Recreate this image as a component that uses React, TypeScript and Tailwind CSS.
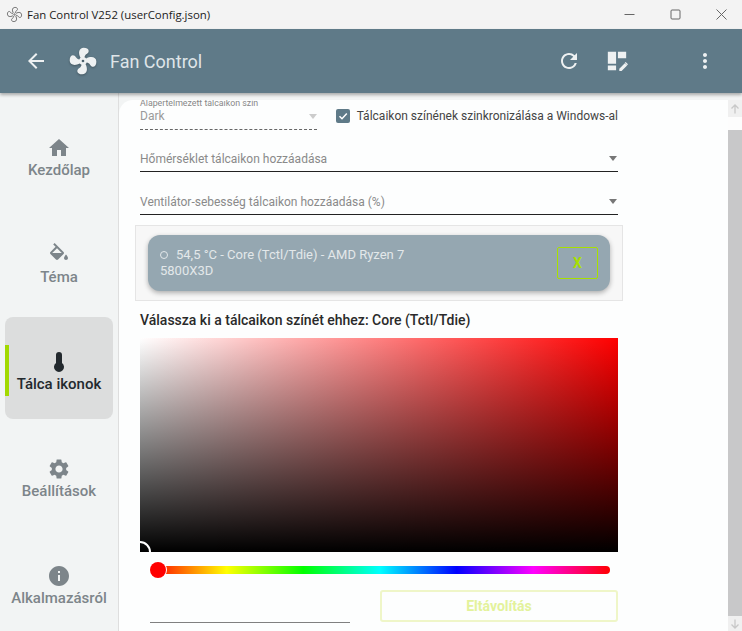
import React from 'react';
import { MdArrowBack, MdHome, MdInfo, MdMoreVert, MdRefresh, MdSettings } from 'react-icons/md';

const FAN_PATH =
  'M12,11A1,1 0 0,0 11,12A1,1 0 0,0 12,13A1,1 0 0,0 13,12A1,1 0 0,0 12,11M12.5,2C17,2 17.11,5.57 14.75,6.75C13.76,7.24 13.32,8.29 13.13,9.22C13.61,9.42 14.03,9.73 14.35,10.13C18.05,8.13 22.03,8.92 22.03,12.5C22.03,17 18.46,17.1 17.28,14.73C16.78,13.74 15.72,13.3 14.79,13.11C14.59,13.59 14.28,14 13.88,14.34C15.87,18.03 15.08,22 11.5,22C7,22 6.91,18.42 9.27,17.24C10.25,16.75 10.69,15.71 10.89,14.79C10.4,14.59 9.97,14.27 9.65,13.87C5.96,15.85 2,15.07 2,11.5C2,7 5.56,6.89 6.74,9.26C7.24,10.25 8.29,10.68 9.22,10.87C9.41,10.39 9.73,9.97 10.14,9.65C8.15,5.96 8.94,2 12.5,2Z';

function ThermoIcon({ className }: { className?: string }) {
  return (
    <svg viewBox="0 0 24 24" className={className} fill="currentColor">
      <path d="M15 13V5a3 3 0 0 0-6 0v8a5 5 0 1 0 6 0z" />
    </svg>
  );
}

function BucketIcon({ className }: { className?: string }) {
  return (
    <svg viewBox="0 0 24 24" className={className} fill="currentColor">
      <path d="M16.56 8.94L7.62 0 6.21 1.41l2.38 2.38-5.15 5.15c-.59.59-.59 1.54 0 2.12l5.5 5.5c.29.29.68.44 1.06.44s.77-.15 1.06-.44l5.5-5.5c.59-.58.59-1.53 0-2.12zM5.21 10L10 5.21 14.79 10H5.21zM19 11.5s-2 2.17-2 3.5c0 1.1.9 2 2 2s2-.9 2-2c0-1.33-2-3.5-2-3.5z" />
    </svg>
  );
}

function TitleBar() {
  return (
    <div className="h-[29px] shrink-0 bg-[#f3f3f3] flex items-center text-[#1c1c1c]">
      <svg viewBox="0 0 24 24" className="w-[17px] h-[17px] ml-[6px] text-[#666]" fill="none" stroke="currentColor" strokeWidth="1.3">
        <path d={FAN_PATH} />
      </svg>
      <span className="ml-[4px] text-[11.4px] font-['Open_Sans',sans-serif]">Fan Control V252 (userConfig.json)</span>
      <div className="ml-auto flex items-center gap-[35px] pr-[15px] text-[#666]">
        <svg width="11" height="11" viewBox="0 0 11 11"><path d="M0.5 5.5H10.5" stroke="currentColor" /></svg>
        <svg width="11" height="11" viewBox="0 0 11 11" fill="none"><rect x="1" y="1" width="9" height="9" rx="1" stroke="currentColor" /></svg>
        <svg width="11" height="11" viewBox="0 0 11 11"><path d="M0.5 0.5L10.5 10.5M10.5 0.5L0.5 10.5" stroke="currentColor" /></svg>
      </div>
    </div>
  );
}

function Header() {
  return (
    <div className="relative z-10 h-[64px] shrink-0 bg-[#5f7a88] shadow-[0_2px_3px_rgba(0,0,0,0.3)] flex items-center text-[#eef1f2]">
      <MdArrowBack className="w-[24px] h-[24px] ml-[24px]" />
      <svg viewBox="0 0 24 24" className="w-[32px] h-[32px] ml-[19px] drop-shadow-[0_1px_1px_rgba(0,0,0,0.3)]" fill="currentColor">
        <path d={FAN_PATH} />
      </svg>
      <span className="ml-[11px] text-[18px] text-[#dfe5e8]">Fan Control</span>
      <div className="ml-auto flex items-center">
        <MdRefresh className="w-[24px] h-[24px]" />
        <svg viewBox="0 0 24 24" className="w-[22px] h-[22px] ml-[25px]" fill="currentColor">
          <path d="M2 2h9v13H2zM13 2h9v7h-9zM2 17h9v5H2zM14.5 20.5v2.5H17l6-6-2.5-2.5zM21.5 13l2.5 2.5-1 1-2.5-2.5z" />
        </svg>
        <MdMoreVert className="w-[24px] h-[24px] ml-[65px] mr-[25px]" />
      </div>
    </div>
  );
}

const NAV = [
  { label: 'Kezdőlap', icon: <MdHome className="w-[24px] h-[24px]" /> },
  { label: 'Téma', icon: <BucketIcon className="w-[24px] h-[24px]" /> },
  { label: 'Tálca ikonok', icon: <ThermoIcon className="w-[24px] h-[24px]" />, active: true },
  { label: 'Beállítások', icon: <MdSettings className="w-[24px] h-[24px]" /> },
  { label: 'Alkalmazásról', icon: <MdInfo className="w-[24px] h-[24px]" /> },
];

function Sidebar() {
  return (
    <div className="w-[119px] shrink-0 border-r border-[#dedede] pt-[10px] pl-[5px] pr-[5px] flex flex-col gap-[5px]">
      {NAV.map((item) => (
        <div
          key={item.label}
          className={`relative h-[102px] shrink-0 rounded-lg flex flex-col items-center justify-center pt-[7px] font-medium text-[15px] leading-[18px] whitespace-nowrap ${
            item.active ? 'bg-[#dcdddd] text-[#23292e]' : 'text-[#7d858a]'
          }`}
        >
          {item.active && <div className="absolute left-0 top-[28px] w-[4px] h-[51px] bg-[#a2d900]" />}
          {item.icon}
          <span className="mt-[1px]">{item.label}</span>
        </div>
      ))}
    </div>
  );
}

function Dropdown({ label }: { label: string }) {
  return (
    <div className="h-[25px] flex items-center justify-between border-b border-[#222] pb-[2px] text-[12px] text-[#8a8a8a]">
      <span className="mt-[2px]">{label}</span>
      <span className="w-0 h-0 border-x-[4px] border-x-transparent border-t-[5px] border-t-[#777] mr-[1px]" />
    </div>
  );
}

function Scrollbar() {
  return (
    <div className="w-[14px] shrink-0 flex flex-col bg-[#fdfdfd]">
      <div className="h-[17px] bg-[#f0f0f0] flex items-center justify-center text-[#c8c8c8]">
        <svg width="10" height="10" viewBox="0 0 10 10" fill="none" stroke="currentColor" strokeWidth="1.3"><path d="M5 9.5V1M1.5 4.5L5 1l3.5 3.5" /></svg>
      </div>
      <div className="h-[13px]" />
      <div className="flex-1 bg-[#c8c8c9]" />
      <div className="h-[15px] bg-[#f0f0f0] flex items-center justify-center text-[#c8c8c8]">
        <svg width="10" height="10" viewBox="0 0 10 10" fill="none" stroke="currentColor" strokeWidth="1.3"><path d="M5 0.5V9M1.5 5.5L5 9l3.5-3.5" /></svg>
      </div>
    </div>
  );
}

function Content() {
  return (
    <div className="flex-1 min-w-0 bg-[#fdfefe] rounded-tl-[14px] flex overflow-hidden mt-[7px]">
      <div className="flex-1 min-w-0 pl-[21px] pr-[110px] w-[609px]">
        {/* theme row */}
        <div className="w-[478px] h-[29px] flex">
          <div className="w-[177px] shrink-0 h-[30px] border-b border-dashed border-[#666] relative">
            <div className="text-[8.8px] leading-[7px] text-[#888] whitespace-nowrap">Alapertelmezett tálcaikon szín</div>
            <div className="flex items-center justify-between text-[12px] leading-[16px] text-[#9a9a9a] mt-[1px]">
              <span>Dark</span>
              <span className="w-0 h-0 border-x-[4px] border-x-transparent border-t-[5px] border-t-[#ccc]" />
            </div>
          </div>
          <div className="ml-[19px] mt-[9px] w-[14px] h-[14px] rounded-[2px] bg-[#5f7a88] flex items-center justify-center">
            <svg width="12" height="12" viewBox="0 0 12 12" fill="none" stroke="#fff" strokeWidth="1.5"><path d="M2.5 6.2L5 8.7 9.8 3.5" /></svg>
          </div>
          <span className="ml-[7px] mt-[8px] text-[12px] leading-[16px] text-[#444] whitespace-nowrap">Tálcaikon színének szinkronizálása a Windows-al</span>
        </div>

        <div className="w-[478px] mt-[18px]"><Dropdown label="Hőmérséklet tálcaikon hozzáadása" /></div>
        <div className="w-[478px] mt-[18px]"><Dropdown label="Ventilátor-sebesség tálcaikon hozzáadása (%)" /></div>

        {/* selected sensor */}
        <div className="-ml-[5px] w-[488px] h-[76px] mt-[10px] bg-[#f7f7f7] border border-[#e5e5e5] px-[12px] pt-[9px]">
          <div className="h-[56px] rounded-xl bg-[#95a7b1] shadow-[0_2px_5px_rgba(0,0,0,0.3)] flex items-center justify-between pl-[12px] pr-[12px]">
            <div className="w-[262px] text-[13px] leading-[16px] text-[#e3e8ea]">
              <span className="inline-block w-[8px] h-[8px] rounded-full border border-[#e3e8ea] mr-[8px]" />
              54,5 °C - Core (Tctl/Tdie) - AMD Ryzen 7 5800X3D
            </div>
            <div className="w-[41px] h-[32px] border border-[#a8e000] rounded-[2px] flex items-center justify-center text-[14px] font-bold text-[#a8e000]">X</div>
          </div>
        </div>

        <div className="w-[478px] mt-[11px] text-[14px] leading-[16px] font-medium text-[#2a2a2a] whitespace-nowrap">Válassza ki a tálcaikon színét ehhez: Core (Tctl/Tdie)</div>

        {/* colour picker */}
        <div className="relative w-[478px] h-[214px] mt-[10px] overflow-hidden bg-[linear-gradient(to_top,#000,transparent),linear-gradient(to_right,#fff,#f00)]">
          <div className="absolute left-[-11px] bottom-[-11px] w-[22px] h-[22px] rounded-full border-2 border-white" />
        </div>

        <div className="relative w-[460px] ml-[10px] h-[8px] mt-[14px] rounded-r-full bg-[linear-gradient(to_right,#f00,#ff0,#0f0,#0ff,#00f,#f0f,#f00)]">
          <div className="absolute left-0 top-[-4px] w-[16px] h-[16px] rounded-full bg-[#ff0000] ring-1 ring-white" />
        </div>

        <div className="w-[478px] flex items-start mt-[16px]">
          <div className="ml-[10px] w-[200px] h-[33px] border-b border-[#808080]" />
          <div className="ml-[30px] w-[238px] h-[32px] rounded-[3px] border-2 border-[#eff6c8] flex items-center justify-center text-[14px] font-bold text-[#e3f29b]">Eltávolítás</div>
        </div>
      </div>
      <Scrollbar />
    </div>
  );
}

export default function App() {
  return (
    <div className="w-[742px] h-[631px] overflow-hidden flex flex-col bg-[#f2f4f4] font-['Roboto',sans-serif]">
      <TitleBar />
      <Header />
      <div className="flex-1 min-h-0 flex">
        <Sidebar />
        <Content />
      </div>
    </div>
  );
}
